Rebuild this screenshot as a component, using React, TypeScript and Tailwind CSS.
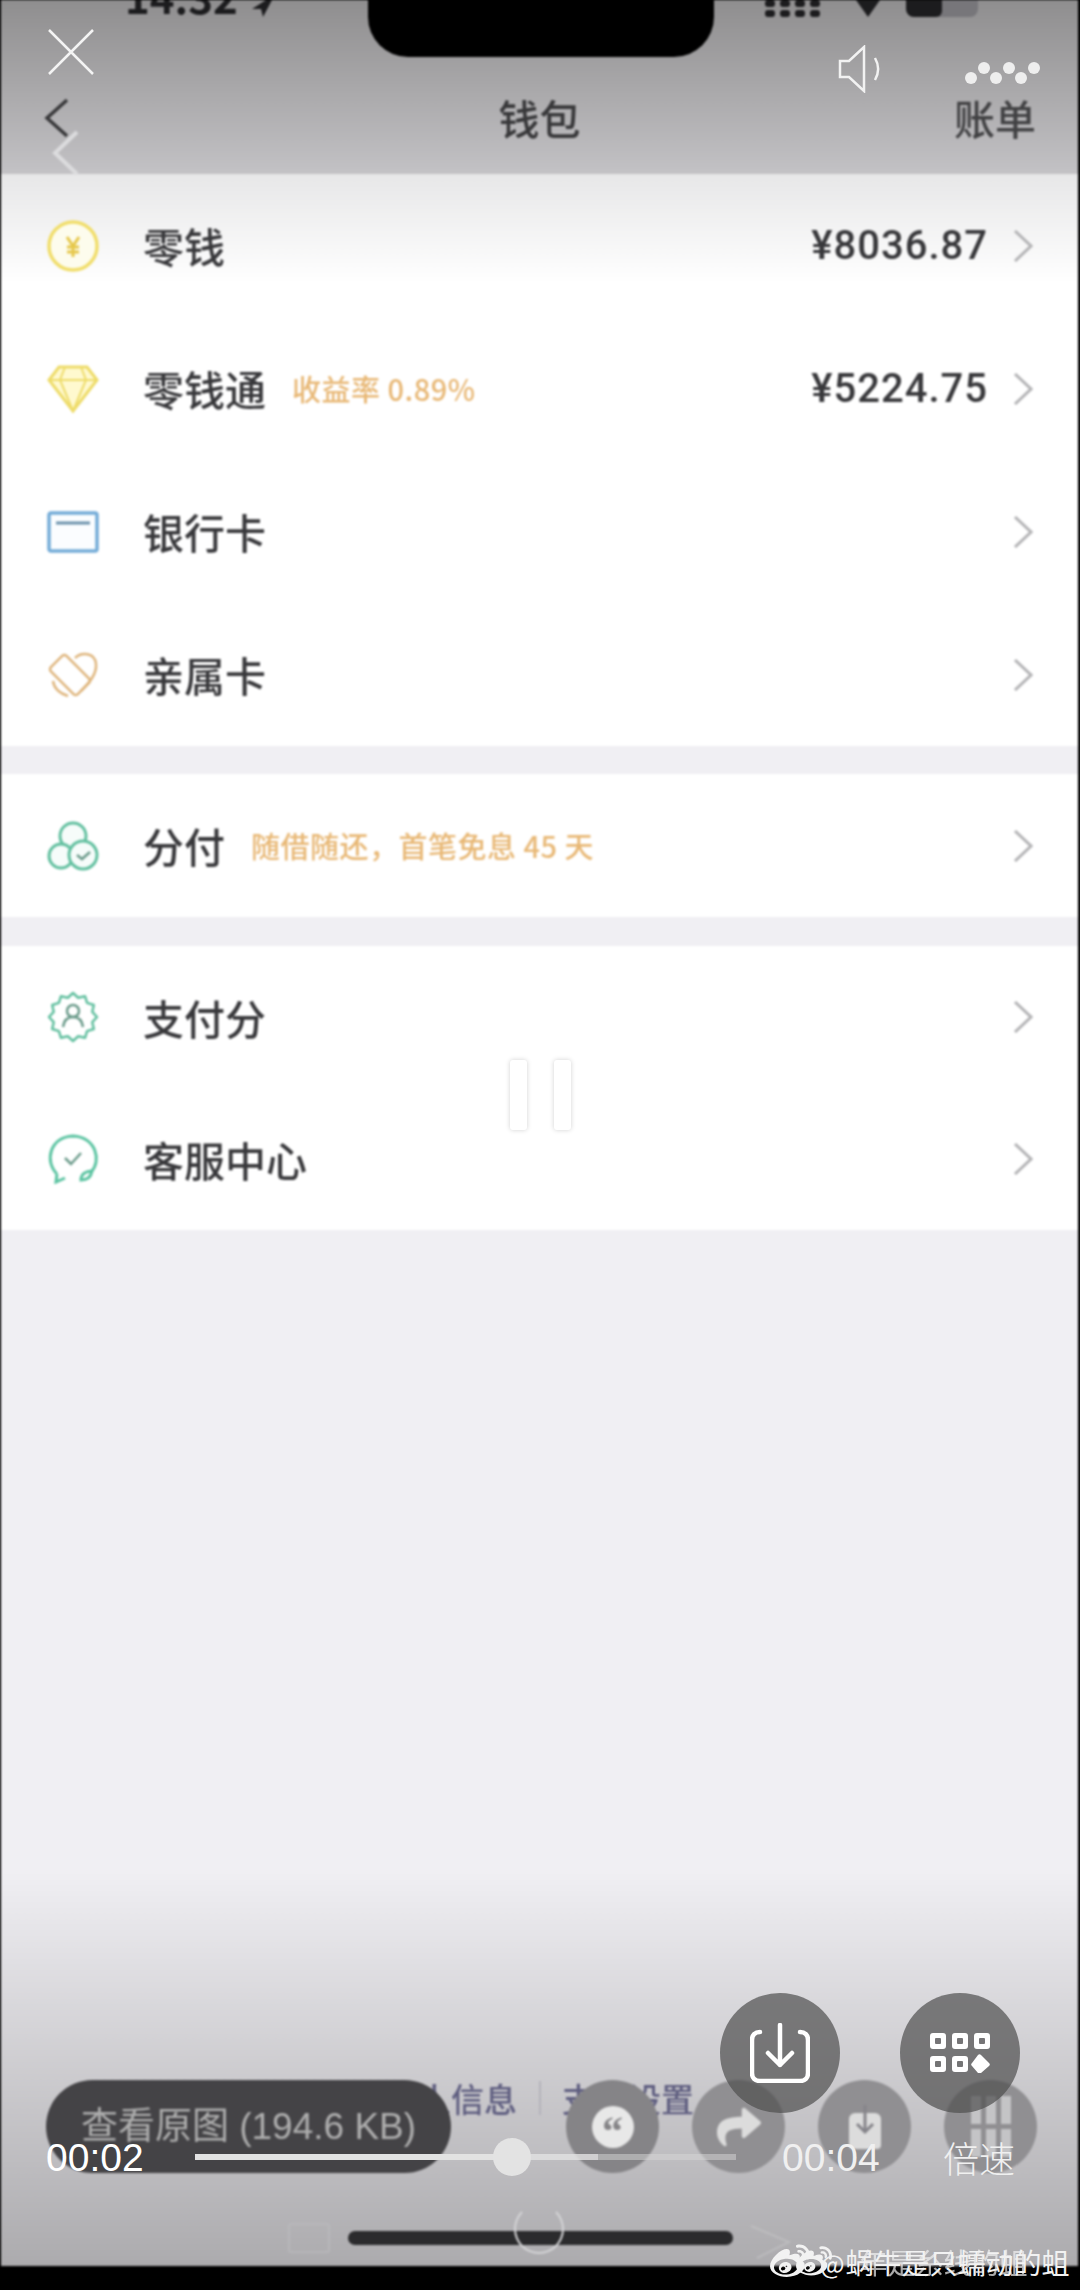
import type { ReactNode } from "react";
import { FaShare, FaWeibo } from "react-icons/fa";

const BADGE_POINTS = Array.from({ length: 24 }, (_, i) => {
  const angle = (i * Math.PI) / 12;
  const radius = i % 2 === 0 ? 24 : 20;
  return `${(26 + radius * Math.sin(angle)).toFixed(1)},${(26 - radius * Math.cos(angle)).toFixed(1)}`;
}).join(" ");

function Chevron() {
  return (
    <svg width="20" height="32" viewBox="0 0 20 32" fill="none" stroke="#b4b4b6" strokeWidth="3">
      <path d="M2 1l16 15L2 31" />
    </svg>
  );
}

function CoinIcon() {
  return (
    <svg width="52" height="52" viewBox="0 0 52 52" fill="none">
      <circle cx="26" cy="26" r="24" fill="#fdfced" stroke="#f1de6c" strokeWidth="3.5" />
      <path d="M20 17l6 9 6-9M26 26v11M20 27h12M20 32h12" stroke="#e6c84c" strokeWidth="3" />
    </svg>
  );
}

function DiamondIcon() {
  return (
    <svg width="52" height="48" viewBox="0 0 52 48" fill="none" stroke="#eedc6a" strokeWidth="3">
      <path d="M12 2h28l10 13-24 31L2 15z" fill="#fff9cf" />
      <path d="M2 15h48M18 2l-5 13 13 31 13-31-5-13" strokeWidth="2" />
    </svg>
  );
}

function CardIcon() {
  return (
    <svg width="52" height="42" viewBox="0 0 52 42" fill="none">
      <rect x="2" y="2" width="48" height="38" rx="2" fill="#fbfdff" stroke="#74acd8" strokeWidth="3.5" />
      <path d="M9 12h34" stroke="#6c93ad" strokeWidth="3" />
    </svg>
  );
}

function FamilyCardIcon() {
  return (
    <svg width="50" height="48" viewBox="0 0 50 48" fill="none" stroke="#dfb67e" strokeWidth="2.5">
      <rect x="11" y="5" width="22" height="38" rx="3" transform="rotate(-45 22 24)" />
      <path d="M27 7c6-6 20-6 21 6 1 10-7 19-15 27" />
      <path d="M5 30c1 8 8 13 15 15" />
    </svg>
  );
}

function InstalmentIcon() {
  return (
    <svg width="52" height="50" viewBox="0 0 52 50" fill="none" stroke="#63c0a0" strokeWidth="3">
      <circle cx="26" cy="15" r="13" fill="#f6fcfa" />
      <circle cx="14" cy="35" r="12" fill="#f6fcfa" />
      <circle cx="36" cy="34" r="14" fill="#f6fcfa" />
      <path d="M30 34l5 4 8-7" stroke="#6d9c8c" strokeWidth="2.5" />
    </svg>
  );
}

function ScoreIcon() {
  return (
    <svg width="52" height="52" viewBox="0 0 52 52" fill="none" stroke="#63c0a0" strokeWidth="2.5">
      <polygon points={BADGE_POINTS} strokeLinejoin="round" />
      <circle cx="26" cy="20" r="6" stroke="#6d9c8c" />
      <path d="M16 36c1-7 5-10 10-10s9 3 10 10" stroke="#6d9c8c" />
    </svg>
  );
}

function ServiceIcon() {
  return (
    <svg width="52" height="50" viewBox="0 0 52 50" fill="none" stroke="#5cc4a2" strokeWidth="3">
      <path d="M10 40C-3 27 3 3 26 2c23 1 29 25 18 36" />
      <path d="M10 40l-1 8 9-4" />
      <path d="M34 46c7 0 10-3 11-9-6 0-11 3-11 9z" />
      <path d="M18 24l6 6 10-11" stroke="#6d9c8c" strokeWidth="2.5" />
    </svg>
  );
}

function Row({
  icon,
  title,
  note,
  amount,
  height,
}: {
  icon: ReactNode;
  title: string;
  note?: string;
  amount?: string;
  height: string;
}) {
  return (
    <div className={`flex items-center pl-[46px] pr-[45px] ${height}`}>
      <div className="flex w-[52px] justify-center">{icon}</div>
      <span className="ml-[44px] text-[41px] font-medium leading-none text-[#38383b]">{title}</span>
      {note && (
        <span className="ml-[26px] text-[29px] font-medium leading-none tracking-[0.5px] text-[#e8b876]">{note}</span>
      )}
      <div className="ml-auto flex items-center gap-[25px]">
        {amount && (
          <span className="font-['Roboto',sans-serif] text-[40px] font-medium leading-none tracking-[1px] text-[#38383b]">
            {amount}
          </span>
        )}
        <Chevron />
      </div>
    </div>
  );
}

function VideoFrame() {
  return (
    <div className="ml-[1px] mr-[2px] flex h-[2266px] flex-col bg-[#f0eff3] blur-[1px]">
      <header className="relative h-[174px] bg-gradient-to-b from-[#8f8e8f] to-[#c3c2c5]">
        <div className="flex h-[17px] items-end overflow-hidden pl-[124px] pr-[100px]">
          <span className="text-[42px] font-bold leading-[42px] text-[#1c1c1e]">14:32</span>
          <svg className="ml-[6px]" width="30" height="17" viewBox="0 0 30 17" fill="#1c1c1e">
            <path d="M22 0l6 0-9 17-2-8-9 0z" />
          </svg>
          <div className="ml-auto grid h-[17px] grid-cols-4 gap-x-[5px] gap-y-[2px]">
            {Array.from({ length: 8 }, (_, i) => (
              <span key={i} className="h-[7px] w-[10px] rounded-[3px] bg-[#1c1c1e]" />
            ))}
          </div>
          <svg className="ml-[30px]" width="36" height="17" viewBox="0 0 36 17" fill="#1c1c1e">
            <path d="M6 0h24l-12 17z" />
          </svg>
          <div className="ml-[20px] flex h-[17px] w-[72px] overflow-hidden rounded-b-[8px] bg-[#77767a]">
            <span className="h-full w-[36px] rounded-br-[6px] bg-[#1c1c1e]" />
          </div>
        </div>

        <div className="mt-[80px] grid h-[40px] grid-cols-3 items-center pl-[42px] pr-[42px]">
          <svg width="26" height="40" viewBox="0 0 26 40" fill="none" stroke="#38383a" strokeWidth="3.5">
            <path d="M24 2L4 20l20 18" />
          </svg>
          <span className="text-center text-[41px] font-medium leading-none text-[#38383a]">钱包</span>
          <span className="text-right text-[41px] font-medium leading-none text-[#414143]">账单</span>
        </div>

        <svg
          className="absolute left-[49px] top-[130px]"
          width="30"
          height="46"
          viewBox="0 0 30 46"
          fill="none"
          stroke="#dcdcde"
          strokeWidth="4"
        >
          <path d="M27 2L5 23l22 21" />
        </svg>
        <div className="absolute left-[367px] top-0 h-[57px] w-[346px] rounded-b-[40px] bg-black" />
      </header>

      <section className="bg-gradient-to-b from-[#e7e7e8] from-0% to-white to-[19%]">
        <Row height="h-[143px]" icon={<CoinIcon />} title="零钱" amount="¥8036.87" />
        <Row height="h-[143px]" icon={<DiamondIcon />} title="零钱通" note="收益率 0.89%" amount="¥5224.75" />
        <Row height="h-[143px]" icon={<CardIcon />} title="银行卡" />
        <Row height="h-[143px]" icon={<FamilyCardIcon />} title="亲属卡" />
      </section>

      <section className="mt-[28px] bg-white">
        <Row height="h-[143px]" icon={<InstalmentIcon />} title="分付" note="随借随还，首笔免息 45 天" />
      </section>

      <section className="mt-[29px] bg-white">
        <Row height="h-[142px]" icon={<ScoreIcon />} title="支付分" />
        <Row height="h-[142px]" icon={<ServiceIcon />} title="客服中心" />
      </section>

      <div className="relative flex flex-1 flex-col justify-end bg-gradient-to-b from-[#f0eff3] from-[62%] to-[#acabae] pb-[93px]">
        <div className="absolute bottom-[151px] left-[384px] flex items-center text-[33px] font-medium leading-none text-[#5f5e80]">
          <span>个人信息</span>
          <span className="ml-[22px] h-[34px] w-[2px] bg-[#b4b3ba]" />
          <span className="ml-[21px]">支付设置</span>
        </div>

        <div className="relative flex items-center pl-[45px] pr-[41px]">
          <div className="flex h-[93px] w-[405px] items-center justify-center rounded-full bg-[#444346] font-['Liberation_Sans','Noto_Sans_CJK_SC',sans-serif] text-[37px] text-[#adadad]">
            查看原图 (194.6 KB)
          </div>
          <div className="ml-auto flex gap-[33px]">
            <div className="flex size-[93px] items-center justify-center rounded-full bg-[#858487]">
              <div className="flex size-[42px] items-start justify-center rounded-full bg-[#e8e8e8] font-['Liberation_Serif',serif] text-[42px] font-bold leading-[50px] text-[#858487]">
                “
              </div>
            </div>
            <div className="flex size-[93px] items-center justify-center rounded-full bg-[#908f92]">
              <FaShare className="size-[44px] text-[#dcdcdc]" />
            </div>
            <div className="flex size-[93px] items-center justify-center rounded-full bg-[#908f92]">
              <svg width="36" height="44" viewBox="0 0 36 44" fill="none">
                <path d="M8 8h20a6 6 0 016 6v26a4 4 0 01-4 4H6a4 4 0 01-4-4V14a6 6 0 016-6z" fill="#dcdcdc" />
                <path d="M18 0v26M10 19l8 8 8-8" stroke="#85848a" strokeWidth="3" />
              </svg>
            </div>
            <div className="flex size-[93px] items-center justify-center rounded-full bg-[#908f92]">
              <div className="grid grid-cols-3 gap-[5px]">
                {Array.from({ length: 6 }, (_, i) => (
                  <span key={i} className="h-[28px] w-[10px] bg-[#c4c4c6]" />
                ))}
              </div>
            </div>
          </div>
        </div>

        <div className="absolute bottom-[21px] left-[347px] h-[14px] w-[385px] rounded-full bg-[#2b2b2d]" />
        <div className="absolute bottom-[13px] left-[287px] h-[30px] w-[42px] rounded-[3px] border-2 border-[#bdbdbf]/60" />
        <div className="absolute bottom-[12px] left-[513px] size-[50px] rounded-full border-2 border-[#d4d4d6] border-t-transparent" />
        <svg className="absolute bottom-[6px] left-[748px]" width="44" height="36" viewBox="0 0 44 36" fill="none" stroke="#c4c4c6" strokeOpacity="0.6" strokeWidth="2">
          <path d="M2 2l38 16L8 34" />
        </svg>
      </div>
    </div>
  );
}

function PlayerOverlay() {
  return (
    <>
      <button type="button" className="absolute left-[48px] top-[29px]">
        <svg width="46" height="46" viewBox="0 0 46 46" fill="none" stroke="#f4f4f4" strokeWidth="2.5">
          <path d="M1 1l44 44M45 1L1 45" />
        </svg>
      </button>
      <svg className="absolute left-[838px] top-[45px]" width="44" height="48" viewBox="0 0 44 48" fill="none" stroke="#f2f2f2" strokeWidth="2.5">
        <path d="M2 16h9L26 2v44L11 32H2z" />
        <path d="M37 13c4 7 4 15 0 22" />
      </svg>
      <div className="absolute left-[965px] top-[62px] grid grid-cols-[repeat(6,12px)] gap-x-[0.5px]">
        {[1, 0, 1, 0, 1, 0].map((low, i) => (
          <span key={i} className={`size-[12px] rounded-full bg-[#eeeeee] ${low ? "mt-[10px]" : ""}`} />
        ))}
      </div>

      <div className="absolute left-[510px] top-[1060px] flex gap-[27px]">
        <span className="h-[70px] w-[17px] rounded-[3px] bg-white shadow-[0_0_5px_rgba(0,0,0,0.18)]" />
        <span className="h-[70px] w-[17px] rounded-[3px] bg-white shadow-[0_0_5px_rgba(0,0,0,0.18)]" />
      </div>

      <div className="absolute left-[720px] top-[1993px] flex gap-[60px]">
        <div className="flex size-[120px] items-center justify-center rounded-full bg-[#4f4f4f]/70">
          <svg width="60" height="60" viewBox="0 0 60 60" fill="none" stroke="white" strokeWidth="4.5" strokeLinecap="round" strokeLinejoin="round">
            <path d="M10 9C5 9 2 12 2 17v33c0 5 3 8 8 8h40c5 0 8-3 8-8V17c0-5-3-8-8-8" />
            <path d="M30 2v40M18 30l12 12 12-12" />
          </svg>
        </div>
        <div className="flex size-[120px] items-center justify-center rounded-full bg-[#4f4f4f]/70">
          <svg width="60" height="40" viewBox="0 0 60 40" fill="white" fillRule="evenodd">
            <path d="M3 0h10a3 3 0 013 3v10a3 3 0 01-3 3H3a3 3 0 01-3-3V3a3 3 0 013-3zm3 5a1 1 0 00-1 1v4a1 1 0 001 1h4a1 1 0 001-1V6a1 1 0 00-1-1z" />
            <path d="M25 0h10a3 3 0 013 3v10a3 3 0 01-3 3H25a3 3 0 01-3-3V3a3 3 0 013-3zm3 5a1 1 0 00-1 1v4a1 1 0 001 1h4a1 1 0 001-1V6a1 1 0 00-1-1z" />
            <path d="M47 0h10a3 3 0 013 3v10a3 3 0 01-3 3H47a3 3 0 01-3-3V3a3 3 0 013-3zm3 5a1 1 0 00-1 1v4a1 1 0 001 1h4a1 1 0 001-1V6a1 1 0 00-1-1z" />
            <path d="M3 23h10a3 3 0 013 3v10a3 3 0 01-3 3H3a3 3 0 01-3-3V26a3 3 0 013-3zm3 5a1 1 0 00-1 1v4a1 1 0 001 1h4a1 1 0 001-1v-4a1 1 0 00-1-1z" />
            <path d="M25 23h10a3 3 0 013 3v10a3 3 0 01-3 3H25a3 3 0 01-3-3V26a3 3 0 013-3zm3 5a1 1 0 00-1 1v4a1 1 0 001 1h4a1 1 0 001-1v-4a1 1 0 00-1-1z" />
            <path d="M51 22l8 8a2 2 0 010 3l-8 7a2 2 0 01-3 0l-6-7a2 2 0 010-3l6-8a2 2 0 013 0z" />
          </svg>
        </div>
      </div>

      <div className="absolute left-[46px] top-[2133px] flex h-[48px] w-[969px] items-center font-['Liberation_Sans',sans-serif] text-[39px] leading-none text-white">
        <span className="w-[149px]">00:02</span>
        <div className="relative flex h-[6px] w-[541px]">
          <span className="w-[317px] bg-[#e2e2e2]" />
          <span className="w-[86px] bg-[#e2e2e2]/80" />
          <span className="flex-1 bg-[#d8d8d8]/50" />
          <span className="absolute left-[298px] top-[-16px] size-[38px] rounded-full bg-[#e3e3e3]" />
        </div>
        <span className="ml-[46px] text-[#f0f0f0]">00:04</span>
        <span className="ml-auto font-['Noto_Sans_CJK_SC',sans-serif] text-[36px] font-light text-[#f0f0f0]">倍速</span>
      </div>

      <div className="absolute left-[770px] top-[2243px] flex h-[38px] items-center whitespace-nowrap text-[#f2f2f2]">
        <FaWeibo className="size-[40px]" />
        <FaWeibo className="ml-[-14px] size-[36px]" />
        <span className="ml-[-12px] text-[26px]">@</span>
        <span className="relative ml-[1px] text-[28px] leading-none">
          蜗牛是只蠕动的蛆
          <span className="absolute left-[14px] top-0 opacity-70">年是糸线的蛆</span>
        </span>
      </div>
    </>
  );
}

export default function App() {
  return (
    <div className="relative h-[2290px] w-[1080px] overflow-hidden bg-black font-['Noto_Sans_CJK_SC',sans-serif]">
      <VideoFrame />
      <PlayerOverlay />
    </div>
  );
}
